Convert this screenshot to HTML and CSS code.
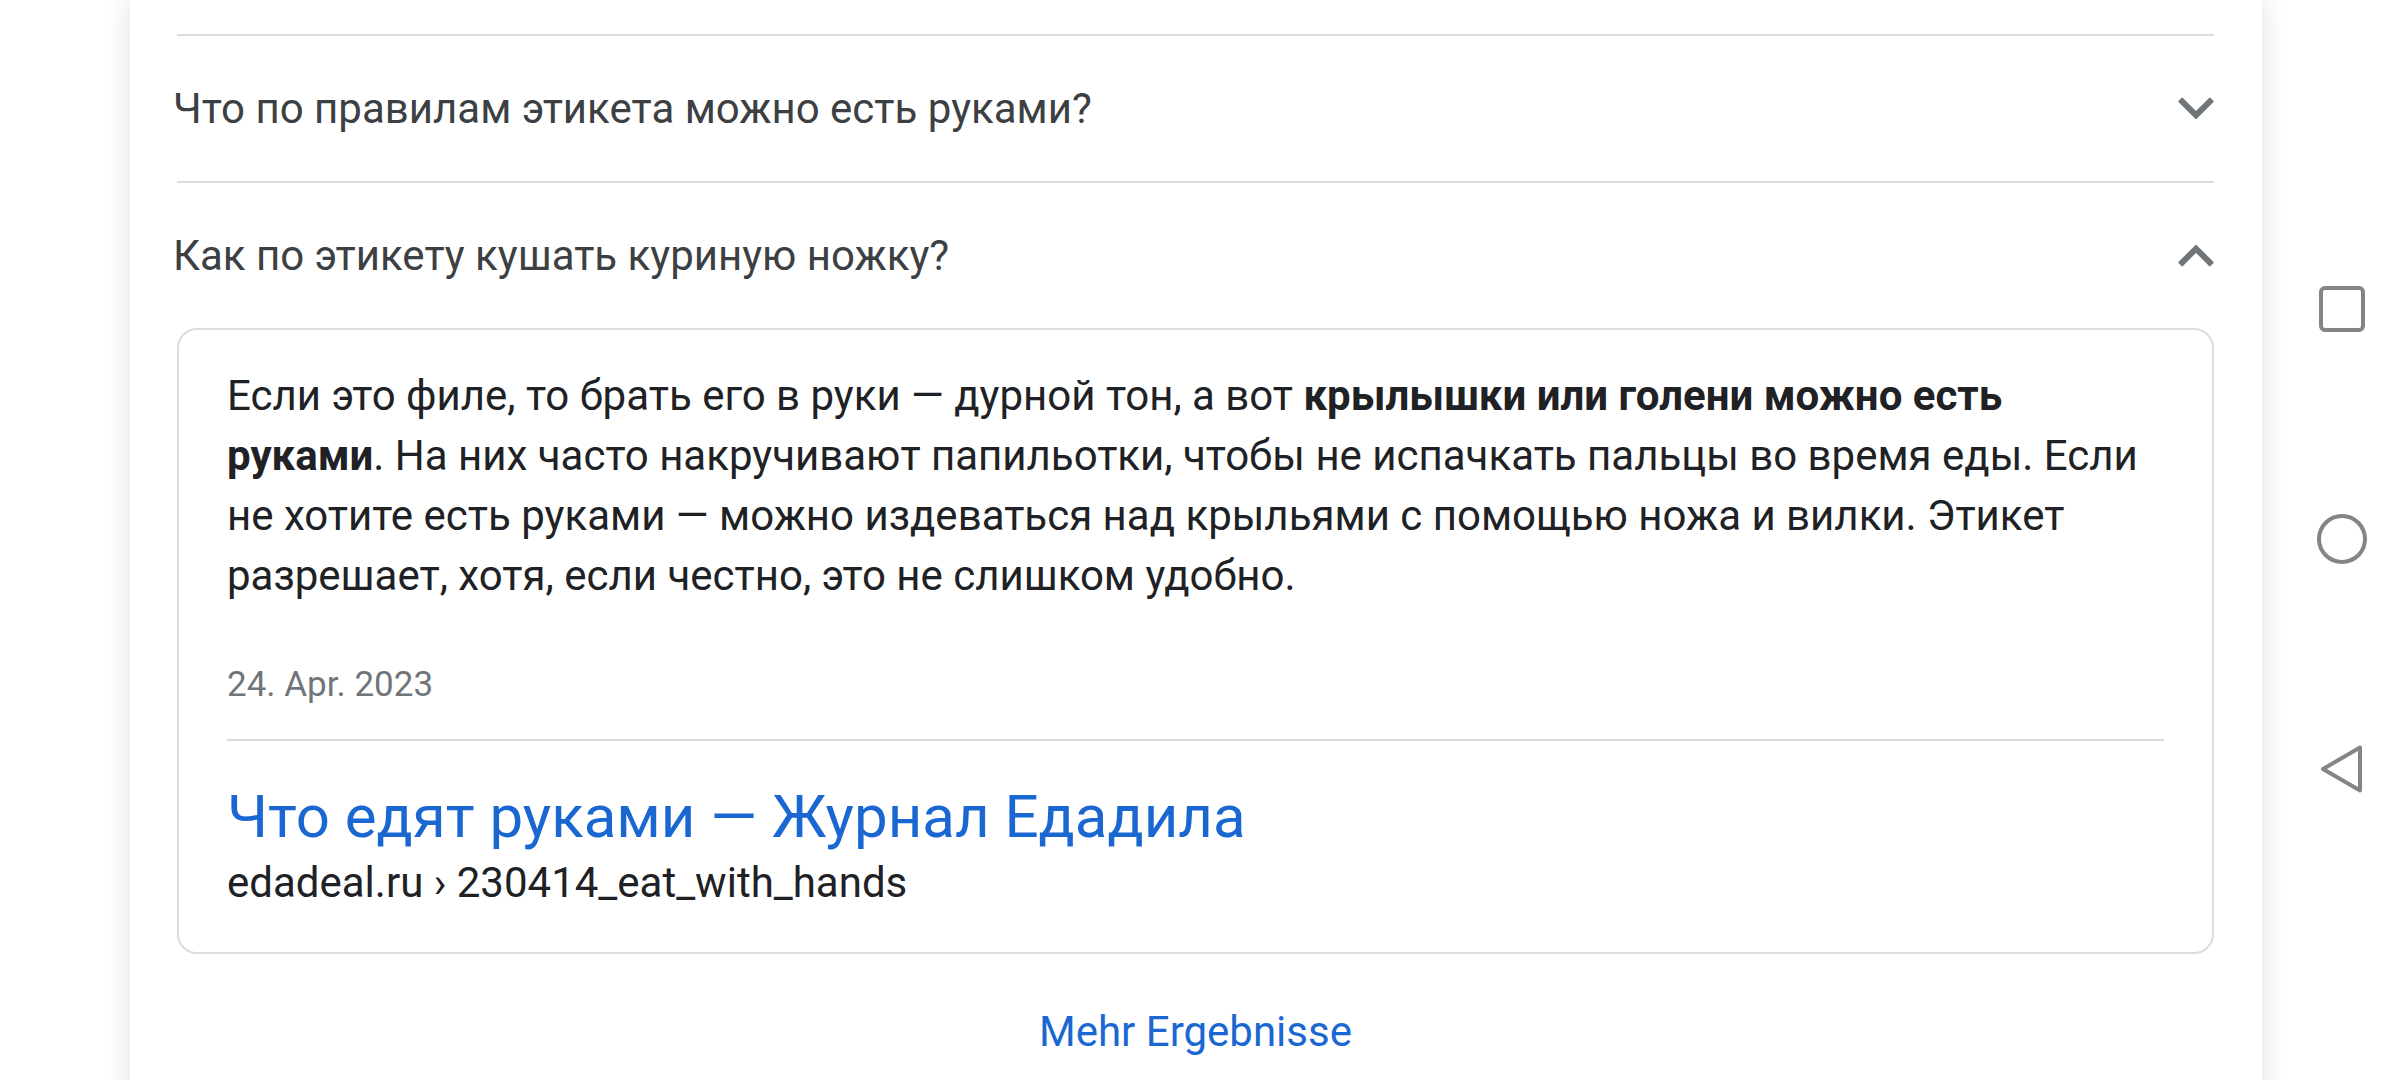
FILE: index.html
```html
<!DOCTYPE html>
<html lang="ru">
<head>
<meta charset="utf-8">
<title>FAQ</title>
<link rel="stylesheet" href="styles.css">
</head>
<body>
<div class="screen">
  <main class="main">
    <div class="card">
      <div class="top-gap"></div>
      <div class="faq-item">
        <div class="faq-q">
          <span class="faq-text">Что по правилам этикета можно есть руками?</span>
          <svg class="chev" width="36" height="23" viewBox="6 8.5 12 7.6" aria-hidden="true"><path d="M16.59 8.59L12 13.17 7.41 8.59 6 10l6 6 6-6z" fill="#70757a"/></svg>
        </div>
      </div>
      <div class="faq-item">
        <div class="faq-q">
          <span class="faq-text">Как по этикету кушать куриную ножку?</span>
          <svg class="chev" width="36" height="23" viewBox="6 7.9 12 7.6" aria-hidden="true"><path d="M12 8l-6 6 1.41 1.41L12 10.83l4.59 4.58L18 14z" fill="#70757a"/></svg>
        </div>
        <div class="answer">
          <p class="answer-text">Если это филе, то брать его в руки — дурной тон, а вот <b>крылышки или голени можно есть руками</b>. На них часто накручивают папильотки, чтобы не испачкать пальцы во время еды. Если не хотите есть руками — можно издеваться над крыльями с помощью ножа и вилки. Этикет разрешает, хотя, если честно, это не слишком удобно.</p>
          <div class="answer-date">24. Apr. 2023</div>
          <div class="answer-source">
            <a class="source-title" href="#">Что едят руками — Журнал Едадила</a>
            <div class="source-url">edadeal.ru › 230414_eat_with_hands</div>
          </div>
        </div>
      </div>
      <div class="more"><a href="#" class="more-link">Mehr Ergebnisse</a></div>
    </div>
  </main>
  <nav class="navbar">
    <svg class="nav-icon" width="56" height="56" viewBox="0 0 56 56" aria-hidden="true"><rect x="7" y="7" width="42" height="42" rx="4" fill="none" stroke="#858585" stroke-width="4"/></svg>
    <svg class="nav-icon" width="56" height="56" viewBox="0 0 56 56" aria-hidden="true"><circle cx="28" cy="28" r="23" fill="none" stroke="#858585" stroke-width="4"/></svg>
    <svg class="nav-icon" width="56" height="56" viewBox="0 0 56 56" aria-hidden="true"><path d="M9 28 L46 6.5 L46 49.5 Z" fill="none" stroke="#858585" stroke-width="4" stroke-linejoin="round"/></svg>
  </nav>
</div>
</body>
</html>
```

FILE: styles.css
```css
* { box-sizing: border-box; }

html, body {
  margin: 0;
  padding: 0;
  background: #ffffff;
}

body {
  font-family: Roboto, "Noto Sans", Arial, sans-serif;
  color: #202124;
}

.screen {
  display: flex;
  width: 2400px;
  height: 1080px;
  overflow: hidden;
  background: #ffffff;
}

.main {
  flex: 0 0 2284px;
  padding-left: 130px;
}

.card {
  width: 2132px;
  min-height: 1200px;
  padding: 0 48px 0 47px;
  background: #ffffff;
  box-shadow: 0 0 26px rgba(0, 0, 0, 0.13);
}

.top-gap {
  height: 34px;
}

.faq-q {
  display: flex;
  align-items: center;
  justify-content: space-between;
  height: 147px;
  border-top: 2px solid #dadce0;
}

.faq-text {
  font-size: 42px;
  line-height: 60px;
  color: #3c4043;
  margin-left: -4px;
}

.chev {
  display: block;
  flex: 0 0 auto;
}

.answer {
  border: 2px solid #dadce0;
  border-radius: 20px;
  padding: 36px 48px 43px;
}

.answer-text {
  margin: 0;
  font-size: 42px;
  line-height: 60px;
  color: #202124;
}

.answer-text b {
  font-weight: 700;
}

.answer-date {
  margin-top: 55px;
  font-size: 35px;
  line-height: 48px;
  color: #70757a;
}

.answer-source {
  margin-top: 30px;
  border-top: 2px solid #dadce0;
  padding-top: 40px;
}

.source-title {
  display: block;
  font-size: 60px;
  line-height: 72px;
  color: #1a67d2;
  text-decoration: none;
}

.source-url {
  margin-top: 4px;
  font-size: 42px;
  line-height: 52px;
  color: #202124;
}

.more {
  margin-top: 48px;
  text-align: center;
}

.more-link {
  font-size: 42px;
  line-height: 60px;
  color: #1a67d2;
  text-decoration: none;
}

.navbar {
  flex: 0 0 116px;
  display: flex;
  flex-direction: column;
  align-items: center;
  padding-top: 281px;
  gap: 174px;
}

.nav-icon {
  display: block;
}
```
